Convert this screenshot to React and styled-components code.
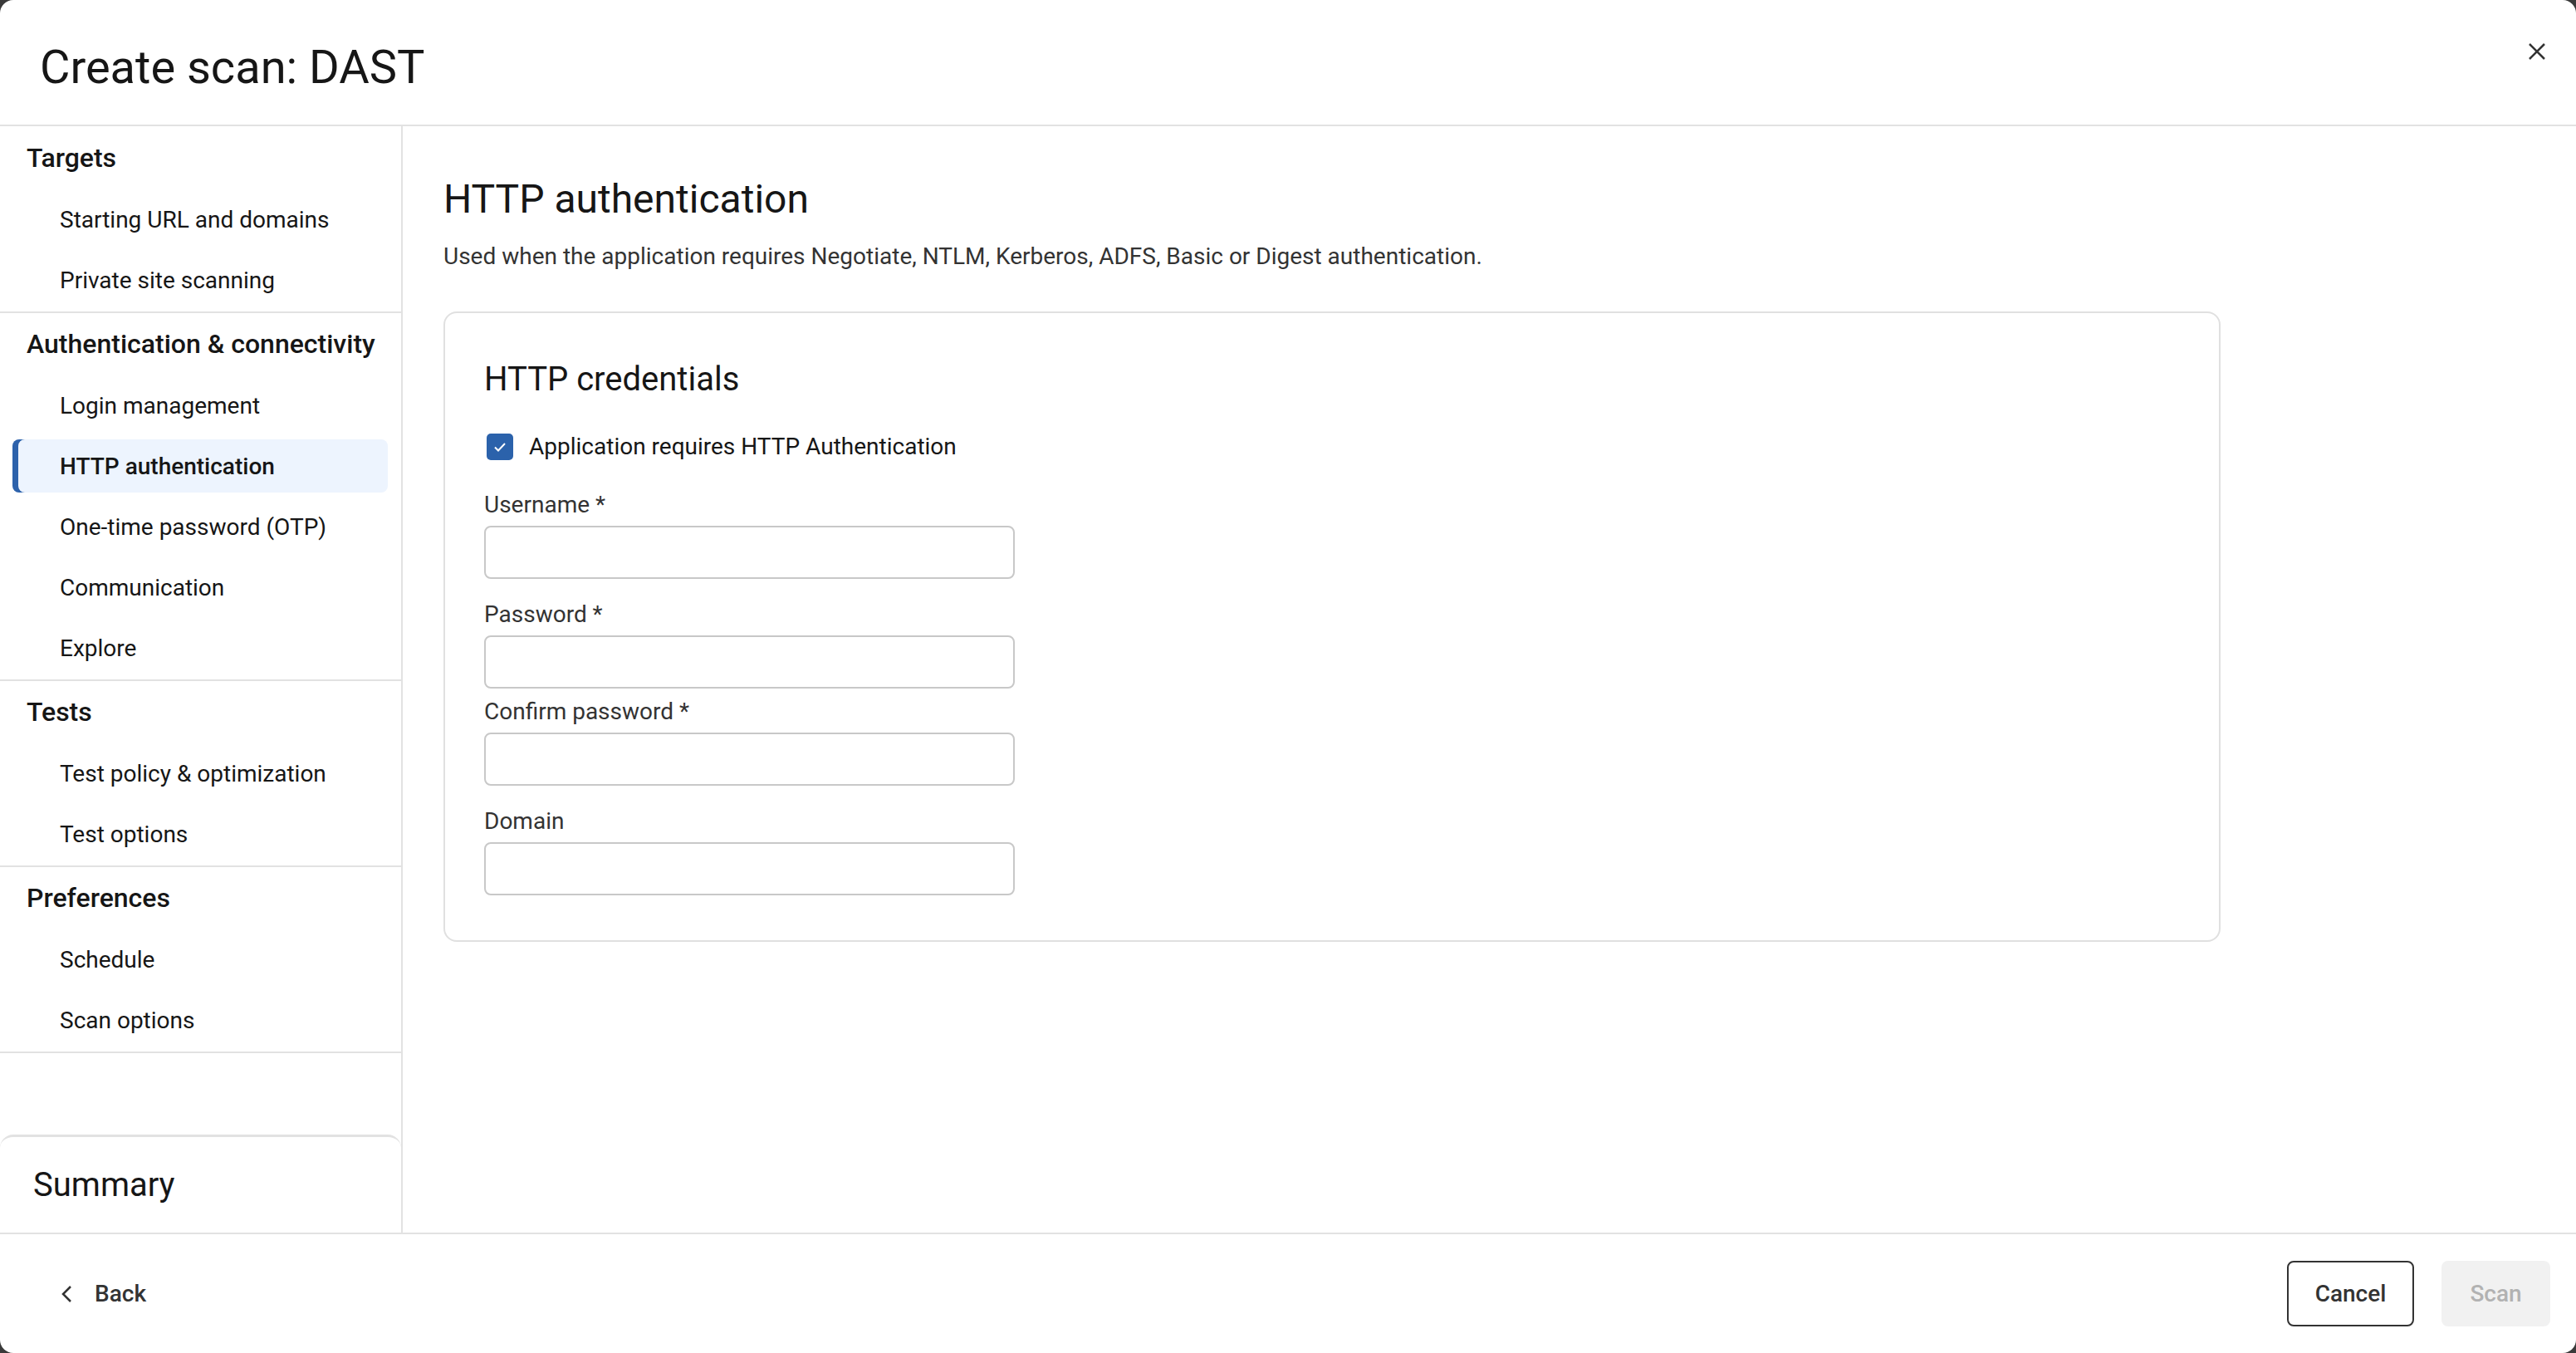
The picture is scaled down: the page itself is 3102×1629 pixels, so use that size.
import React from "react";
import styled, { createGlobalStyle } from "styled-components";

const GlobalStyle = createGlobalStyle`
  html, body {
    margin: 0;
    padding: 0;
    background: #3a3a3a;
  }
  body {
    font-family: Roboto, "Liberation Sans", Arial, sans-serif;
    color: #161616;
  }
  * {
    box-sizing: border-box;
  }
`;

const Dialog = styled.div`
  width: 100vw;
  height: 100vh;
  display: flex;
  flex-direction: column;
  background: #fff;
  border-radius: 16px;
  overflow: hidden;
`;

const Header = styled.header`
  height: 152px;
  flex-shrink: 0;
  display: flex;
  justify-content: space-between;
  align-items: flex-start;
  padding: 42px 27px 0 48px;
  border-bottom: 2px solid #e2e2e2;
`;

const Title = styled.h1`
  margin: 11px 0 0;
  font-size: 56px;
  line-height: 56px;
  font-weight: 400;
  color: #161616;
`;

const CloseButton = styled.button`
  width: 40px;
  height: 40px;
  display: flex;
  align-items: center;
  justify-content: center;
  border: none;
  background: transparent;
  padding: 0;
  cursor: pointer;
`;

const Body = styled.div`
  flex: 1;
  min-height: 0;
  display: flex;
`;

const Sidebar = styled.aside`
  width: 485px;
  flex-shrink: 0;
  display: flex;
  flex-direction: column;
  border-right: 2px solid #e2e2e2;
  padding-top: 1px;
`;

const Section = styled.div`
  padding: 13px 16px 6px 15px;
  border-bottom: 2px solid #e2e2e2;
`;

const SectionTitle = styled.div`
  height: 48px;
  line-height: 48px;
  padding-left: 17px;
  font-size: 32px;
  font-weight: 500;
  color: #161616;
`;

const ItemList = styled.div`
  display: flex;
  flex-direction: column;
  gap: 9px;
  margin-top: 18px;
`;

const NavItem = styled.div`
  height: 64px;
  display: flex;
  align-items: center;
  padding-left: 57px;
  font-size: 28px;
  font-weight: ${(p) => (p.$active ? 500 : 400)};
  color: #161616;
  border-radius: 8px;
  background: ${(p) => (p.$active ? "#edf4fe" : "transparent")};
  box-shadow: ${(p) => (p.$active ? "inset 7px 0 0 #2d62ab" : "none")};
`;

const SummaryCard = styled.div`
  margin-top: auto;
  height: 118px;
  display: flex;
  align-items: center;
  padding-left: 40px;
  border-top: 3px solid #e2e2e2;
  border-radius: 16px 16px 0 0;
  font-size: 40px;
  color: #161616;
`;

const Main = styled.main`
  flex: 1;
  padding: 60px 0 0 49px;
`;

const PageTitle = styled.h2`
  margin: 0;
  font-size: 48px;
  line-height: 56px;
  font-weight: 400;
  color: #161616;
`;

const Description = styled.p`
  margin: 21px 0 0;
  font-size: 28px;
  line-height: 40px;
  color: #333;
`;

const Card = styled.section`
  width: 2140px;
  margin-top: 46px;
  padding: 56px 48px 54px 47px;
  border: 2px solid #e0e0e0;
  border-radius: 16px;
`;

const CardTitle = styled.h3`
  margin: 0;
  font-size: 40px;
  line-height: 48px;
  font-weight: 400;
  color: #161616;
`;

const CheckRow = styled.label`
  display: flex;
  align-items: center;
  gap: 19px;
  margin-top: 41px;
  font-size: 28px;
  line-height: 32px;
  color: #161616;
`;

const CheckBox = styled.span`
  width: 32px;
  height: 32px;
  margin-left: 3px;
  border-radius: 5px;
  background: #2b62ab;
  display: flex;
  align-items: center;
  justify-content: center;
`;

const Field = styled.div`
  margin-top: ${(p) => p.$gap}px;
`;

const Label = styled.div`
  font-size: 28px;
  line-height: 40px;
  color: #333;
`;

const Input = styled.input`
  display: block;
  width: 639px;
  height: 64px;
  margin-top: 5px;
  border: 2px solid #c8c8c8;
  border-radius: 8px;
  background: #fff;
  font-family: inherit;
  font-size: 28px;
  padding: 0 16px;
`;

const Footer = styled.footer`
  height: 145px;
  flex-shrink: 0;
  display: flex;
  align-items: center;
  justify-content: space-between;
  padding: 0 31px 0 48px;
  border-top: 2px solid #e2e2e2;
`;

const BackButton = styled.button`
  display: flex;
  align-items: center;
  gap: 24px;
  padding: 0 0 0 22px;
  border: none;
  background: transparent;
  font-family: inherit;
  font-size: 28px;
  font-weight: 500;
  color: #333;
  cursor: pointer;
`;

const Actions = styled.div`
  display: flex;
  gap: 33px;
`;

const Button = styled.button`
  height: 79px;
  width: ${(p) => p.$width}px;
  border-radius: 8px;
  font-family: inherit;
  font-size: 28px;
  font-weight: 500;
  cursor: pointer;
  border: ${(p) => (p.$disabled ? "none" : "2px solid #333")};
  background: ${(p) => (p.$disabled ? "#f1f1f1" : "#fff")};
  color: ${(p) => (p.$disabled ? "#b2b2b2" : "#333")};
`;

const sections = [
  { title: "Targets", items: ["Starting URL and domains", "Private site scanning"] },
  {
    title: "Authentication & connectivity",
    items: [
      "Login management",
      "HTTP authentication",
      "One-time password (OTP)",
      "Communication",
      "Explore",
    ],
  },
  { title: "Tests", items: ["Test policy & optimization", "Test options"] },
  { title: "Preferences", items: ["Schedule", "Scan options"] },
];

const fields = [
  { label: "Username *", gap: 34, type: "text" },
  { label: "Password *", gap: 23, type: "password" },
  { label: "Confirm password *", gap: 8, type: "password" },
  { label: "Domain", gap: 23, type: "text" },
];

export default function App() {
  return (
    <>
      <GlobalStyle />
      <Dialog>
        <Header>
          <Title>Create scan: DAST</Title>
          <CloseButton aria-label="Close">
            <svg width="20" height="20" viewBox="0 0 20 20">
              <path d="M1 1L19 19M19 1L1 19" stroke="#333" strokeWidth="2.5" />
            </svg>
          </CloseButton>
        </Header>

        <Body>
          <Sidebar>
            {sections.map((s) => (
              <Section key={s.title}>
                <SectionTitle>{s.title}</SectionTitle>
                <ItemList>
                  {s.items.map((item) => (
                    <NavItem key={item} $active={item === "HTTP authentication"}>
                      {item}
                    </NavItem>
                  ))}
                </ItemList>
              </Section>
            ))}
            <SummaryCard>Summary</SummaryCard>
          </Sidebar>

          <Main>
            <PageTitle>HTTP authentication</PageTitle>
            <Description>
              Used when the application requires Negotiate, NTLM, Kerberos, ADFS, Basic or Digest
              authentication.
            </Description>

            <Card>
              <CardTitle>HTTP credentials</CardTitle>
              <CheckRow>
                <CheckBox>
                  <svg width="20" height="20" viewBox="0 0 20 20">
                    <path
                      d="M4 10.5L8 14.5L16 6"
                      fill="none"
                      stroke="#fff"
                      strokeWidth="2"
                    />
                  </svg>
                </CheckBox>
                Application requires HTTP Authentication
              </CheckRow>

              {fields.map((f) => (
                <Field key={f.label} $gap={f.gap}>
                  <Label>{f.label}</Label>
                  <Input type={f.type} />
                </Field>
              ))}
            </Card>
          </Main>
        </Body>

        <Footer>
          <BackButton>
            <svg width="20" height="24" viewBox="0 0 20 24">
              <path d="M15 3L6 12L15 21" fill="none" stroke="#333" strokeWidth="2.5" />
            </svg>
            Back
          </BackButton>
          <Actions>
            <Button $width={153}>Cancel</Button>
            <Button $width={131} $disabled>
              Scan
            </Button>
          </Actions>
        </Footer>
      </Dialog>
    </>
  );
}
